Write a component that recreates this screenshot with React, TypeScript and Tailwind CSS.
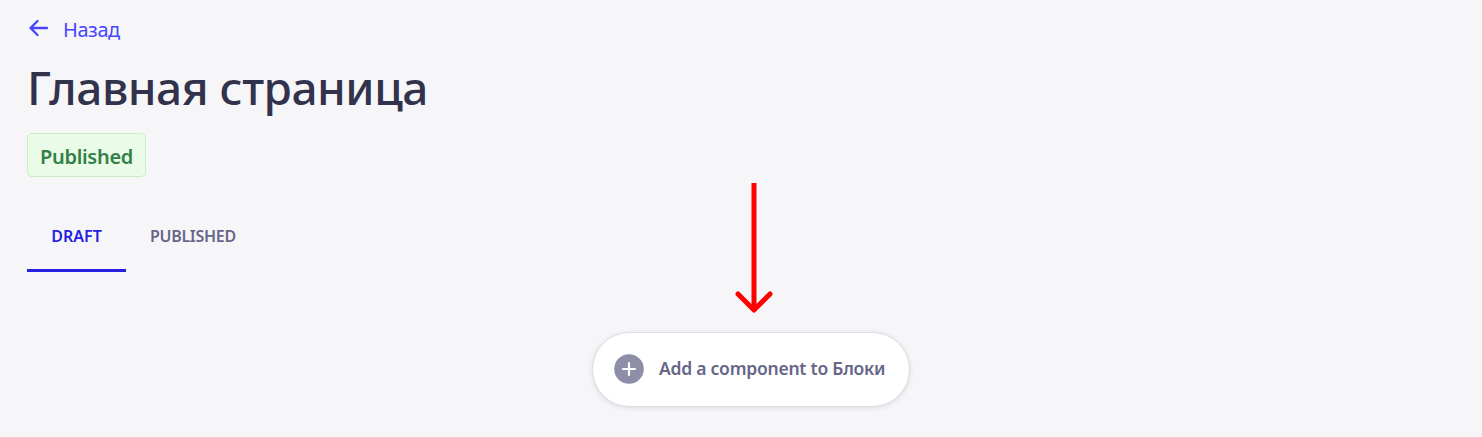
function BackLink() {
  return (
    <a href="#" className="flex h-[60px] items-center gap-[15px] pl-0.5 text-[#4945ff]">
      <svg className="-mt-1 h-[18px] w-[19px]" viewBox="0 0 19 18" fill="none" stroke="currentColor" strokeWidth="2.3" strokeLinecap="round" strokeLinejoin="round">
        <path d="M18 9H1.5M8.5 2L1.5 9L8.5 16" />
      </svg>
      <span className="text-[20px] tracking-[-0.45px]">Назад</span>
    </a>
  );
}

function AddComponentButton() {
  return (
    <button className="flex h-[75px] w-[318px] items-center rounded-full border border-[#dcdce4] bg-white pb-[2px] pl-[21px] text-[#666687] shadow-[0_1px_5px_rgba(33,33,52,0.12)]">
      <svg className="h-[30px] w-[30px] shrink-0" viewBox="0 0 30 30" fill="none">
        <circle cx="15" cy="15" r="14.8" fill="#8e8ea9" />
        <path d="M15 9V21M9 15H21" stroke="white" strokeWidth="2.2" strokeLinecap="round" />
      </svg>
      <span className="ml-[15px] whitespace-nowrap text-[17.5px] font-[560] tracking-[-0.24px]">Add a component to Блоки</span>
    </button>
  );
}

export default function App() {
  return (
    <main className="relative h-[437px] w-full overflow-hidden bg-[#f6f6f9] px-[27px] font-['Noto_Sans',sans-serif]">
      <BackLink />
      <h1 className="h-[73px] whitespace-nowrap text-[46px] leading-[54px] font-[550] tracking-[-0.5px] text-[#32324d]">Главная страница</h1>
      <div className="flex h-[44px] w-[119px] items-center justify-center rounded-[5px] border border-[#c6f0c2] bg-[#eafbe7] pt-[3px] text-[20px] font-[560] tracking-[-0.3px] text-[#328048]">Published</div>
      <nav className="mt-[24px] flex h-[71px] text-[16px] font-[560]">
        <button className="w-[99px] border-b-[3px] border-[#271fe0] pt-[2px] text-[#271fe0]">DRAFT</button>
        <button className="border-b-[3px] border-transparent px-6 pt-[2px] tracking-[-0.3px] text-[#666687]">PUBLISHED</button>
      </nav>
      <div className="mt-[60px] ml-[565px]">
        <AddComponentButton />
      </div>
      <svg className="pointer-events-none absolute top-[183px] left-[735px] h-[130px] w-[38px]" viewBox="0 0 38 130" fill="none" stroke="#ff0000" strokeWidth="5">
        <path d="M19 0V127" />
        <path d="M3 111L19 127L35 111" strokeLinecap="round" strokeLinejoin="round" />
      </svg>
    </main>
  );
}
